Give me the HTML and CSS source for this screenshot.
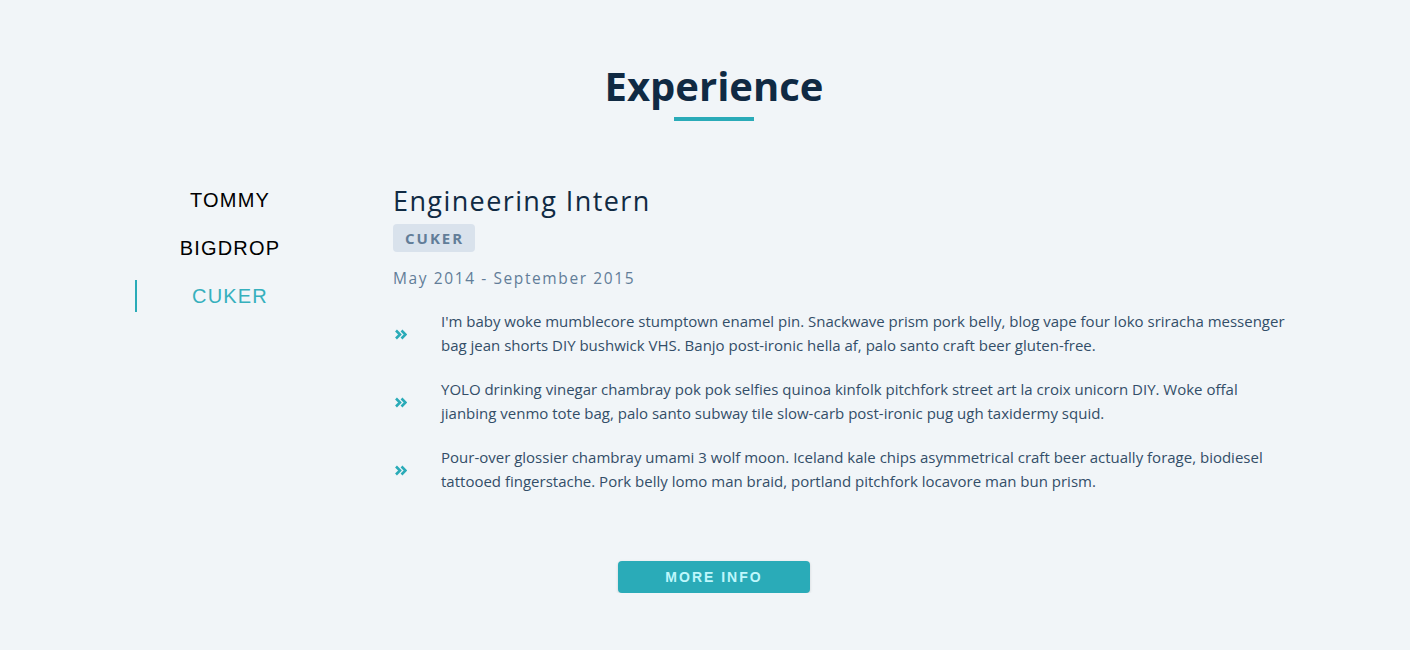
FILE: index.html
```html
<!DOCTYPE html>
<html lang="en">
<head>
<meta charset="utf-8">
<title>Experience</title>
<link rel="stylesheet" href="styles.css">
</head>
<body>
<section class="experience">
  <h2 class="title">Experience</h2>
  <div class="title-bar"></div>
  <div class="layout">
    <ul class="tabs">
      <li class="tab">TOMMY</li>
      <li class="tab">BIGDROP</li>
      <li class="tab active">CUKER</li>
    </ul>
    <div class="job">
      <h3 class="job-title">Engineering Intern</h3>
      <span class="badge">CUKER</span>
      <p class="dates">May 2014 - September 2015</p>
      <ul class="duties">
        <li class="duty">
          <svg class="chev" viewBox="0 0 12 11" width="12" height="11"><path d="M1 1.5 L5 5.5 L1 9.5 M6.5 1.5 L10.5 5.5 L6.5 9.5" fill="none" stroke="#2aabb8" stroke-width="2.6" stroke-linejoin="miter"/></svg>
          <p>I'm baby woke mumblecore stumptown enamel pin. Snackwave prism pork belly, blog vape four loko sriracha messenger bag jean shorts DIY bushwick VHS. Banjo post-ironic hella af, palo santo craft beer gluten-free.</p>
        </li>
        <li class="duty">
          <svg class="chev" viewBox="0 0 12 11" width="12" height="11"><path d="M1 1.5 L5 5.5 L1 9.5 M6.5 1.5 L10.5 5.5 L6.5 9.5" fill="none" stroke="#2aabb8" stroke-width="2.6" stroke-linejoin="miter"/></svg>
          <p>YOLO drinking vinegar chambray pok pok selfies quinoa kinfolk pitchfork street art la croix unicorn DIY. Woke offal jianbing venmo tote bag, palo santo subway tile slow-carb post-ironic pug ugh taxidermy squid.</p>
        </li>
        <li class="duty">
          <svg class="chev" viewBox="0 0 12 11" width="12" height="11"><path d="M1 1.5 L5 5.5 L1 9.5 M6.5 1.5 L10.5 5.5 L6.5 9.5" fill="none" stroke="#2aabb8" stroke-width="2.6" stroke-linejoin="miter"/></svg>
          <p>Pour-over glossier chambray umami 3 wolf moon. Iceland kale chips asymmetrical craft beer actually forage, biodiesel tattooed fingerstache. Pork belly lomo man braid, portland pitchfork locavore man bun prism.</p>
        </li>
      </ul>
    </div>
  </div>
  <div class="actions">
    <button class="btn">MORE INFO</button>
  </div>
</section>
</body>
</html>
```

FILE: styles.css
```css
* { box-sizing: border-box; }
html, body { margin: 0; padding: 0; }
body {
  background: #f1f5f8;
  font-family: "Open Sans", "Noto Sans", sans-serif;
  color: #102a43;
}
.experience {
  padding-top: 58px;
  padding-left: 18px;
  display: flex;
  flex-direction: column;
  align-items: center;
}
.title {
  margin: 0;
  font-size: 40px;
  font-weight: 700;
  letter-spacing: 0;
  line-height: 56px;
  color: #102a43;
}
.title-bar {
  width: 80px;
  height: 4px;
  background: #2aabb8;
  margin-top: 3px;
}
.layout {
  margin-top: 63px;
  width: 1170px;
  display: grid;
  grid-template-columns: 188px 1fr;
  column-gap: 70px;
  align-self: flex-start;
  margin-left: 117px;
}
.tabs {
  list-style: none;
  margin: 0;
  padding: 0;
  display: flex;
  flex-direction: column;
  gap: 16px;
}
.tab {
  font-family: "Liberation Sans", Arial, sans-serif;
  font-size: 20px;
  letter-spacing: 1.2px;
  line-height: 32px;
  text-align: center;
  color: #000;
  border-left: 2px solid transparent;
}
.tab.active {
  color: #36b0bd;
  border-left-color: #2aabb8;
}
.job-title {
  margin: -1px 0 0;
  font-size: 27px;
  font-weight: 400;
  letter-spacing: 1.4px;
  line-height: 36px;
  color: #102a43;
}
.badge {
  display: inline-block;
  margin-top: 5px;
  height: 28px;
  background: #d9e2ec;
  color: #627d98;
  font-size: 15px;
  font-weight: 700;
  letter-spacing: 2px;
  line-height: 28px;
  padding: 0 11px 0 12px;
  border-radius: 4px;
  vertical-align: top;
}
.dates {
  margin: 15px 0 0;
  font-size: 15.5px;
  letter-spacing: 1.6px;
  line-height: 22px;
  color: #627d98;
}
.duties {
  list-style: none;
  margin: 20px 0 0;
  padding: 0;
  display: flex;
  flex-direction: column;
  gap: 20px;
}
.duty {
  display: flex;
  align-items: center;
  gap: 34px;
}
.chev {
  flex: none;
  margin-left: 2px;
  margin-top: 2px;
}
.duty p {
  margin: 0;
  width: 850px;
  font-size: 15px;
  line-height: 24px;
  color: #334e68;
}
.actions {
  margin-top: 68px;
  display: flex;
  justify-content: center;
}
.btn {
  width: 192px;
  height: 32px;
  border: 0;
  border-radius: 4px;
  background: #2aabb8;
  color: #bff7fc;
  font-family: "Liberation Sans", Arial, sans-serif;
  font-size: 14px;
  font-weight: 700;
  letter-spacing: 2px;
  box-shadow: 0 1px 3px rgba(0,0,0,0.15);
  cursor: pointer;
}
```
